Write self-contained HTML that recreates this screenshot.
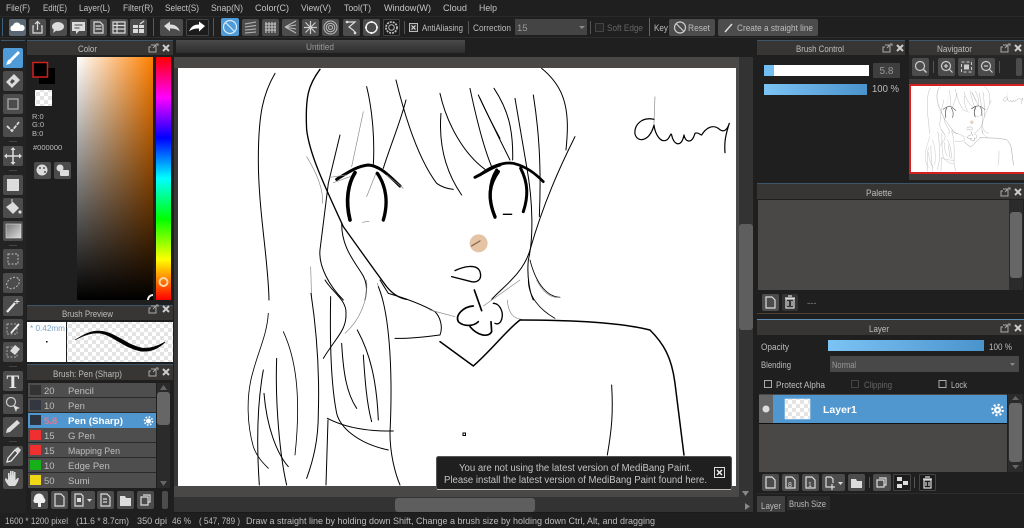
<!DOCTYPE html>
<html><head><meta charset="utf-8"><style>
html,body{margin:0;padding:0;background:#1f1f1f;width:1024px;height:528px;overflow:hidden}
svg{display:block}
#page{filter:blur(.35px)}
text{font-family:"Liberation Sans",sans-serif;font-size:9.5px;fill:#bdbdbd}
.m text{fill:#c4c4c4}
.h{fill:#383634}
.b{fill:#4c4c4c}
.i{fill:#dcdcdc}
.s{fill:none;stroke:#dcdcdc;stroke-width:1.2}
.l path{fill:none;stroke:#000;stroke-width:3;stroke-linecap:round;stroke-linejoin:round}
.l .f{stroke:#888;stroke-width:2}
</style></head><body>
<svg id="page" width="1024" height="528" viewBox="0 0 1024 528" xmlns="http://www.w3.org/2000/svg">
<defs>
<linearGradient id="gw" x1="0" x2="1" y1="0" y2="0"><stop offset="0" stop-color="#fff"/><stop offset="1" stop-color="#ff7f00"/></linearGradient>
<linearGradient id="gk" x1="0" x2="0" y1="0" y2="1"><stop offset="0" stop-color="#000" stop-opacity="0"/><stop offset="1" stop-color="#000"/></linearGradient>
<linearGradient id="hue" x1="0" x2="0" y1="0" y2="1"><stop offset="0" stop-color="#f00"/><stop offset=".167" stop-color="#f0f"/><stop offset=".333" stop-color="#00f"/><stop offset=".5" stop-color="#0ff"/><stop offset=".667" stop-color="#0f0"/><stop offset=".833" stop-color="#ff0"/><stop offset="1" stop-color="#f00"/></linearGradient>
<linearGradient id="bl" x1="0" x2="1" y1="0" y2="0"><stop offset="0" stop-color="#7cc3f5"/><stop offset="1" stop-color="#4a93cc"/></linearGradient>
<linearGradient id="tab" x1="0" x2="0" y1="0" y2="1"><stop offset="0" stop-color="#4a4a4a"/><stop offset="1" stop-color="#2e2e2e"/></linearGradient>
<linearGradient id="gr" x1="0" x2="1" y1="0" y2="1"><stop offset="0" stop-color="#777"/><stop offset="1" stop-color="#ddd"/></linearGradient>
<pattern id="ck" width="8" height="8" patternUnits="userSpaceOnUse"><rect width="8" height="8" fill="#fff"/><rect width="4" height="4" fill="#e4e4e4"/><rect x="4" y="4" width="4" height="4" fill="#e4e4e4"/></pattern>
<g id="hb"><path d="M151 45h5v7h-7v-5h2" fill="none" stroke="#aaa"/><path d="M153 48l3-3M156 44h2v2" stroke="#aaa" fill="none"/><path d="M163 45l6 6M169 45l-6 6" stroke="#ccc" stroke-width="2"/></g>
<g id="art" class="l">
<g transform="translate(240,60) scale(.3333)">
<path d="M105 40C70 100 55 160 55 300C55 450 85 600 87 720"/>
<path d="M240 28C205 75 195 110 200 210C210 290 260 390 310 500C360 570 410 640 440 680C460 705 480 715 500 718" style="stroke-width:4"/>
<path d="M380 80C395 140 405 230 400 315"/>
<path class="f" d="M370 155L335 320"/>
<path d="M300 225L265 370L240 570C235 620 270 680 310 720"/>
<path class="f" d="M200 290C225 330 250 380 248 430"/>
<path d="M498 120C480 190 450 260 430 325"/>
<path d="M468 60C490 150 530 290 590 370Q610 385 640 388"/>
<path d="M600 100C620 190 670 280 735 328"/>
<path d="M603 160C595 260 620 340 665 405"/>
<path d="M690 85C710 180 730 260 755 320"/>
<path d="M715 105Q750 180 780 235"/>
<path class="f" d="M410 335L380 410"/>
<path d="M305 490C305 560 340 600 365 640C385 670 380 700 375 720"/>
<path d="M290 358C320 340 350 318 385 315C420 318 445 345 480 378" style="stroke-width:9"/>
<path d="M345 338C325 370 315 420 330 480" style="stroke-width:11"/>
<path d="M412 340C440 380 445 430 430 480" style="stroke-width:10"/>
<path class="f" d="M270 352L320 345M280 368L330 350M490 385L440 345"/>
<path class="f" d="M367 487L387 484"/>
<path d="M705 352C730 340 755 322 780 315" style="stroke-width:9"/>
<path d="M775 335C750 370 740 410 765 470" style="stroke-width:10"/>
<circle cx="716" cy="550" r="27" style="fill:#e5c4a6;stroke:none"/>
<path d="M695 558L720 543" style="stroke:#8a6a50;stroke-width:4"/>
<path d="M645 632C670 620 710 610 720 635C728 660 710 670 690 664L635 650" style="stroke-width:4"/>
<path class="f" d="M212 620L215 720M412 670L428 720"/>
</g>
<g transform="translate(480,60) scale(.3333)">
<path d="M185 25C240 70 260 120 262 190C263 220 260 250 258 270"/>
<path d="M285 230C240 320 190 430 150 570C130 640 70 680 35 718"/>
<path d="M0 115C30 180 60 240 90 300"/>
<path d="M42 85C85 150 100 210 98 300"/>
<path d="M105 115L140 320C160 430 160 540 145 600C140 650 150 700 160 720"/>
<path d="M160 105C175 200 185 310 178 470"/>
<path d="M0 345C30 320 70 305 100 310C140 320 165 340 190 365" style="stroke-width:8"/>
<path d="M50 330C25 370 25 420 45 472" style="stroke-width:9"/>
<path d="M122 325C145 370 145 410 130 455" style="stroke-width:9"/>
<path d="M70 463L95 463" style="stroke-width:4"/>
<path d="M150 600C165 660 195 710 240 712" style="stroke-width:2.500"/>
<path class="f" d="M525 110L522 190"/>
<path d="M522 178C485 170 462 195 465 222C472 250 510 245 522 195C525 220 540 250 560 240C570 235 572 215 575 225C580 255 605 265 612 225C615 245 635 255 645 220C655 215 660 225 665 225C680 200 700 195 715 205C735 225 745 200 748 190C735 230 733 250 735 278" style="stroke-width:3.600"/>
</g>
<g transform="translate(240,280) scale(.3333)">
<path d="M85 100C80 170 55 210 35 290C20 350 20 430 40 500C50 530 70 550 85 565" style="stroke-width:2.500"/>
<path d="M213 40C225 120 240 240 235 400C235 480 220 540 200 595"/>
<path d="M255 0C280 40 320 60 318 100C320 150 290 170 250 235"/>
<path class="f" d="M380 0C385 60 360 120 315 160"/>
<path d="M272 50C270 150 270 300 290 400C300 440 350 490 445 510"/>
<path d="M305 190C310 280 320 340 350 385"/>
<path d="M352 150C390 220 410 300 415 420"/>
<path d="M370 225C375 300 380 370 395 425"/>
<path d="M415 20C445 90 460 250 450 460C450 520 465 580 480 615"/>
<path d="M262 415C310 440 370 455 460 453"/>
<path d="M264 420L258 615"/>
<path d="M130 155C165 230 185 340 165 525" style="stroke-width:2.500"/>
<path d="M110 235C105 370 120 530 140 615"/>
<path d="M70 270C50 380 50 500 58 615"/>
<path d="M72 340C80 440 110 520 145 560"/>
<path d="M465 175C510 177 560 170 600 165C610 140 600 110 585 95C540 70 480 50 445 40L420 0"/>
</g>
<g transform="translate(430,280) scale(.3333)">
<path class="f" d="M0 90L75 110"/>
<path d="M130 78C100 80 75 105 85 125C100 140 130 140 145 125" style="stroke-width:5"/>
<path d="M190 70C210 70 225 100 212 125Q205 135 195 130" style="stroke-width:4"/>
<path d="M120 140C140 165 175 175 185 155L183 125" style="stroke-width:5"/>
<path d="M133 30L155 92" style="stroke-width:5"/>
<path class="f" d="M160 78L270 0"/>
<path d="M30 185L130 258C190 205 230 150 270 120" style="stroke-width:4.500"/>
<path class="f" d="M232 60C235 100 250 115 275 118"/>
<path d="M270 120C400 120 560 125 660 150C700 190 725 230 735 310L762 525" style="stroke-width:4.500"/>
<path d="M545 315C550 400 545 450 532 525" style="stroke-width:3"/>
<path d="M295 0C295 50 330 90 375 115" style="stroke-width:2.500"/>
<path class="f" d="M320 0C340 40 365 55 390 52"/>
</g>
</g>
</defs>

<rect width="1024" height="528" fill="#1f1f1f"/>
<!-- menu -->
<g class="m">
<text x="6" y="11" textLength="24" lengthAdjust="spacingAndGlyphs">File(F)</text><text x="43" y="11" textLength="24" lengthAdjust="spacingAndGlyphs">Edit(E)</text><text x="79" y="11" textLength="31" lengthAdjust="spacingAndGlyphs">Layer(L)</text><text x="123" y="11" textLength="30" lengthAdjust="spacingAndGlyphs">Filter(R)</text><text x="165" y="11" textLength="34" lengthAdjust="spacingAndGlyphs">Select(S)</text><text x="211" y="11" textLength="32" lengthAdjust="spacingAndGlyphs">Snap(N)</text><text x="255" y="11" textLength="34" lengthAdjust="spacingAndGlyphs">Color(C)</text><text x="301" y="11" textLength="30" lengthAdjust="spacingAndGlyphs">View(V)</text><text x="344" y="11" textLength="27" lengthAdjust="spacingAndGlyphs">Tool(T)</text><text x="384" y="11" textLength="47" lengthAdjust="spacingAndGlyphs">Window(W)</text><text x="443" y="11" textLength="24" lengthAdjust="spacingAndGlyphs">Cloud</text><text x="479" y="11" textLength="18" lengthAdjust="spacingAndGlyphs">Help</text>
</g>
<rect y="16" width="1024" height="1" fill="#2a2a2a"/>
<rect y="37" width="1024" height="1" fill="#2c2c2c"/>
<!-- toolbar -->
<rect x="2" y="18" width="1" height="18" fill="#3c5f7c"/>
<rect x="153" y="18" width="1" height="18" fill="#3c5f7c"/>
<rect x="213" y="18" width="1" height="18" fill="#3c5f7c"/>
<rect x="649" y="18" width="1" height="18" fill="#3c6f9c"/>
<g>
<rect x="9" y="19" width="17" height="17" rx="2" fill="#5b6772"/>
<path d="M12 31a3 3 0 0 1 1-5.600a4 4 0 0 1 7.500-.5a3.200 3.200 0 0 1 2 6.100z" fill="#fff"/>
<rect class="b" x="29" y="19" width="17" height="17" rx="2"/><path class="s" d="M34 26h-1v7h9v-7h-1M37.500 30v-8M35 24l2.500-2.500l2.500 2.500"/>
<rect class="b" x="50" y="19" width="17" height="17" rx="2"/><ellipse class="i" cx="58" cy="26.500" rx="6" ry="4.500"/><path class="i" d="M54 29l-1 4l4-3z"/>
<rect class="b" x="70" y="19" width="17" height="17" rx="2"/><path class="i" d="M72 22h13v9h-6l-3 3v-3h-4z"/><path d="M74.500 25h8M74.500 28h5" stroke="#4a4a4a" fill="none"/>
<rect class="b" x="90" y="19" width="17" height="17" rx="2"/><path class="s" d="M94 22h6l3 3v8h-9zM95.500 26h6M95.500 29h6"/>
<rect class="b" x="110" y="19" width="18" height="17" rx="2"/><path class="s" d="M113 22h12v11h-12zM113 25.500h12M113 29h12M117 22v11"/>
<rect class="b" x="130" y="19" width="17" height="17" rx="2"/><path class="i" d="M133 25h5v3h-5zM139 25h5v3h-5zM133 29h5v4h-5zM139 29h5v4h-5z"/><path class="s" d="M140 24l4-3"/>
<rect class="b" x="160" y="19" width="23" height="17" rx="2"/><path class="i" d="M164 26l6-4.500v3c5 0 8 2 10 7c-3-2.500-6-3-10-3v3z"/>
<rect x="186.500" y="19.500" width="22" height="16" rx="1" fill="#1c1c1c" stroke="#444"/><path d="M205 26l-6-4.500v3c-5 0-8 2-10 7c3-2.500 6-3 10-3v3z" fill="#fff"/>
<rect x="221" y="18" width="18" height="18" rx="2" fill="#4f9bd8"/><circle cx="230" cy="27" r="6.500" fill="none" stroke="#d8ecfa" stroke-width="1.200"/><path d="M225.500 22.500l9 9" stroke="#d8ecfa" stroke-width="1.200"/>
<rect class="b" x="242" y="19" width="17" height="17" rx="2"/><path d="M245 24l11-2M245 27l11-1.500M245 30l11-1M245 33l11-1" stroke="#aaa" stroke-width="1.200" fill="none"/>
<rect class="b" x="262" y="19" width="17" height="17" rx="2"/><path d="M266 22v11M269 22v11M272 22v11M275 22v11M265 24h11M265 27h11M265 30h11" stroke="#ccc" fill="none"/>
<rect class="b" x="282" y="19" width="17" height="17" rx="2"/><path d="M285 27l11-6M285 27l11-2M285 27l11 2M285 27l11 6" stroke="#bbb" fill="none"/>
<rect class="b" x="302" y="19" width="17" height="17" rx="2"/><path d="M310.500 21v13M304 27.500h13M305.500 22.500l10 10M315.500 22.500l-10 10" stroke="#ccc" stroke-width="1.200" fill="none"/>
<rect class="b" x="322" y="19" width="17" height="17" rx="2"/><circle cx="330.500" cy="27.500" r="6.500" fill="none" stroke="#bbb"/><circle cx="330.500" cy="27.500" r="4.300" fill="none" stroke="#bbb"/><circle cx="330.500" cy="27.500" r="2" fill="none" stroke="#bbb"/>
<rect class="b" x="343" y="19" width="17" height="17" rx="2"/><path class="s" d="M347 22h8l-6 5l4 3l3 3"/><circle class="i" cx="347" cy="22" r="1.300"/><circle class="i" cx="355" cy="33" r="1.300"/>
<rect class="b" x="363" y="19" width="17" height="17" rx="2"/><circle cx="371.500" cy="27.500" r="5.500" fill="none" stroke="#eee" stroke-width="1.500"/><circle cx="371.500" cy="22" r="1" fill="#fff"/><circle cx="377" cy="27.500" r="1" fill="#fff"/><circle cx="366" cy="27.500" r="1" fill="#fff"/><circle cx="371.500" cy="33" r="1" fill="#fff"/>
<rect x="383.500" y="19.500" width="16" height="16" rx="1" fill="#1c1c1c" stroke="#444"/><circle cx="391.500" cy="27.500" r="5.500" fill="none" stroke="#bbb" stroke-width="1.800" stroke-dasharray="2 1"/><circle cx="391.500" cy="27.500" r="2.800" fill="none" stroke="#bbb"/>
</g>
<rect x="404" y="21" width="1" height="13" fill="#555"/>
<rect x="409.500" y="23.500" width="8" height="8" fill="#333" stroke="#bbb"/><path d="M411.500 25.500l4 4M415.500 25.500l-4 4" stroke="#ddd" stroke-width="1.200"/>
<text x="422" y="31" textLength="41" lengthAdjust="spacingAndGlyphs">AntiAliasing</text>
<rect x="468" y="21" width="1" height="13" fill="#555"/>
<text x="473" y="31" textLength="38" lengthAdjust="spacingAndGlyphs">Correction</text>
<rect x="515" y="19" width="72" height="16" fill="#444"/><text x="517" y="31" style="fill:#999">15</text><path d="M579 26h6l-3 3z" fill="#888"/>
<rect x="590" y="21" width="1" height="13" fill="#555"/>
<rect x="595.500" y="23.500" width="8" height="8" fill="#262626" stroke="#444"/>
<text x="607" y="31" style="fill:#666" textLength="36" lengthAdjust="spacingAndGlyphs">Soft Edge</text>
<text x="654" y="31" textLength="14" lengthAdjust="spacingAndGlyphs">Key</text>
<rect class="b" x="669" y="19" width="46" height="17" rx="2"/><circle cx="680" cy="27.500" r="5.500" fill="none" stroke="#ccc" stroke-width="1.200"/><path d="M676 23.500l8 8" stroke="#ccc" stroke-width="1.200"/><text x="688" y="31" textLength="22" lengthAdjust="spacingAndGlyphs">Reset</text>
<rect class="b" x="718" y="19" width="100" height="17" rx="2"/><path d="M725 32l7-8" stroke="#ddd" stroke-width="1.500"/><text x="737" y="31" textLength="76" lengthAdjust="spacingAndGlyphs">Create a straight line</text>

<!-- left tools -->
<rect x="0" y="38" width="26" height="475" fill="#232323"/>
<rect x="1" y="40" width="24" height="1" fill="#3c5568"/>
<g>
<rect x="3" y="48" width="20" height="20" rx="2" fill="#4f9bd8"/><path d="M18 51l2 2l-8 8l-2-2z" fill="#fff"/><path d="M10 59l2 2c-1 3-3 3-6 4c1-2 1-5 4-6z" fill="#fff"/>
<rect class="b" x="3" y="71" width="20" height="20" rx="2"/><path class="i" d="M14 74l6 6l-8 8l-6-6z"/><path d="M12 79l3 2l-3 3l-2-2z" fill="#4a4a4a"/>
<rect class="b" x="3" y="94" width="20" height="20" rx="2"/><rect x="8" y="99" width="10" height="10" fill="none" stroke="#aaa" stroke-width="1.300"/>
<rect class="b" x="3" y="117" width="20" height="20" rx="2"/><path d="M7 126l5 5l7-9" fill="none" stroke="#dcdcdc" stroke-width="1.800" stroke-dasharray="4 1"/>
<rect x="9" y="141" width="8" height="1" fill="#444"/>
<rect class="b" x="3" y="146" width="20" height="20" rx="2"/><path d="M13 148v16M5 156h16" stroke="#dcdcdc" stroke-width="1.500"/><path class="i" d="M13 147l2.500 3h-5zM13 165l2.500-3h-5zM4 156l3-2.500v5zM22 156l-3-2.500v5z"/>
<rect x="9" y="170" width="8" height="1" fill="#444"/>
<rect class="b" x="3" y="175" width="20" height="20" rx="2"/><rect class="i" x="7" y="179" width="12" height="12"/>
<rect class="b" x="3" y="198" width="20" height="20" rx="2"/><path class="i" d="M6 207l7-5l6 6l-6 6z"/><path d="M12 199v7" stroke="#dcdcdc"/><circle class="i" cx="20" cy="212" r="1.600"/>
<rect class="b" x="3" y="221" width="20" height="20" rx="2"/><rect x="6" y="224" width="15" height="14" fill="url(#gr)" stroke="#ddd" stroke-width=".6"/>
<rect x="9" y="245" width="8" height="1" fill="#444"/>
<rect class="b" x="3" y="249" width="20" height="20" rx="2"/><rect x="8" y="254" width="10" height="10" fill="none" stroke="#bbb" stroke-dasharray="2 1.500"/>
<rect class="b" x="3" y="273" width="20" height="20" rx="2"/><ellipse cx="13" cy="283" rx="7" ry="5" transform="rotate(-35 13 283)" fill="none" stroke="#bbb" stroke-dasharray="2 1.500"/>
<rect class="b" x="3" y="296" width="20" height="20" rx="2"/><path d="M7 312l8-9" stroke="#e8e8e8" stroke-width="2.400"/><path d="M17 299v5M14.500 301.500h5" stroke="#e8e8e8"/>
<rect class="b" x="3" y="319" width="20" height="20" rx="2"/><rect x="7" y="324" width="10" height="10" fill="none" stroke="#aaa" stroke-dasharray="2 1.500"/><path d="M11 333l8-9" stroke="#eee" stroke-width="1.800"/>
<rect class="b" x="3" y="342" width="20" height="20" rx="2"/><rect x="7" y="347" width="10" height="10" fill="none" stroke="#aaa" stroke-dasharray="2 1.500"/><path class="i" d="M15 345l5 4l-5 6l-5-4z"/>
<rect x="9" y="366" width="8" height="1" fill="#444"/>
<rect class="b" x="3" y="371" width="20" height="20" rx="2"/><text x="6.500" y="388" style="font-family:'Liberation Serif',serif;font-weight:bold;font-size:19px;fill:#e8e8e8">T</text>
<rect class="b" x="3" y="394" width="20" height="20" rx="2"/><circle cx="11" cy="402" r="4.500" fill="none" stroke="#ccc" stroke-width="1.200"/><path class="i" d="M13 405l7 3l-3 1l-1 3z"/>
<rect class="b" x="3" y="417" width="20" height="20" rx="2"/><path class="i" d="M17 420l3 3l-10 9l-4 1l1-4z"/>
<rect x="9" y="441" width="8" height="1" fill="#444"/>
<rect class="b" x="3" y="446" width="20" height="20" rx="2"/><path d="M7 462l1-4l7-8l3 3l-7 8z" fill="none" stroke="#e8e8e8" stroke-width="1.300"/><path class="i" d="M15 449l3-2l3 3l-2 3z"/>
<rect class="b" x="3" y="469" width="20" height="20" rx="2"/><path class="i" d="M9 486c-2-2-4-5-4-7l1-1l2 2v-7h1.500l.5 5v-7h1.500l.5 6v-6h1.500l.5 6v-5h1.500v8l2-2h1.200c0 3-2 6-3.700 8z"/>
</g>

<!-- color panel -->
<rect x="27" y="40" width="146" height="1" fill="#3c5568"/>
<rect class="h" x="27" y="41" width="146" height="14"/>
<text x="78" y="52" textLength="19" lengthAdjust="spacingAndGlyphs">Color</text>
<use href="#hb"/>
<rect x="77" y="57" width="76" height="243" fill="url(#gw)"/><rect x="77" y="57" width="76" height="243" fill="url(#gk)"/>
<rect x="156" y="57" width="15" height="243" fill="url(#hue)"/>
<circle cx="163.500" cy="282" r="4" fill="none" stroke="#ffd9a8" stroke-width="2"/>
<path d="M148 300a5 5 0 0 1 5-5" fill="none" stroke="#eee" stroke-width="2"/>
<rect x="39" y="68" width="16" height="16" fill="#000"/>
<rect x="33" y="62.500" width="14.500" height="14.500" fill="#000" stroke="#d41f1f" stroke-width="1.500"/>
<rect x="35" y="90" width="17" height="16" fill="url(#ck)"/>
<text x="32" y="119" style="font-size:7.500px">R:0</text><text x="32" y="127" style="font-size:7.500px">G:0</text><text x="32" y="136" style="font-size:7.500px">B:0</text><text x="33" y="150" style="font-size:7.500px">#000000</text>
<rect class="b" x="34" y="162" width="17" height="17" rx="2"/><circle class="i" cx="42" cy="170" r="5.500"/><circle cx="40" cy="168" r="1" fill="#555"/><circle cx="44" cy="168" r="1" fill="#555"/><circle cx="45" cy="172" r="1" fill="#555"/>
<rect class="b" x="54" y="162" width="17" height="17" rx="2"/><circle class="i" cx="60" cy="168" r="3.500"/><rect class="i" x="60" y="170" width="9" height="6" rx="1"/>

<!-- brush preview -->
<rect x="27" y="305" width="146" height="1" fill="#3c5568"/>
<rect class="h" x="27" y="306" width="146" height="14"/>
<text x="62" y="317" textLength="51" lengthAdjust="spacingAndGlyphs">Brush Preview</text>
<use href="#hb" y="261"/>
<rect x="27" y="322" width="39" height="40" fill="#fff"/>
<rect x="67" y="322" width="106" height="40" fill="url(#ck)"/>
<text x="30" y="331" style="fill:#7aa3c4;font-size:8.500px" textLength="35" lengthAdjust="spacingAndGlyphs">* 0.42mm</text>
<rect x="46" y="341" width="1.500" height="1.500" fill="#000"/>
<path d="M75 340C83 335 90 331 98 331C115 331 125 345 142 348C150 349 158 346 165 342C157 350 148 352 140 351C122 347 112 334 98 333C90 333 82 336 75 340z" fill="#000" stroke="#000" stroke-width=".6"/>

<!-- brush list -->
<rect x="27" y="364" width="146" height="1" fill="#3c5568"/>
<rect class="h" x="27" y="365" width="146" height="15"/>
<text x="53" y="377" textLength="69" lengthAdjust="spacingAndGlyphs">Brush: Pen (Sharp)</text>
<use href="#hb" y="324"/>
<rect x="28" y="383" width="128" height="105" fill="#4e4e4e"/>
<g fill="#2a2a2a"><rect x="28" y="397" width="128" height="1"/><rect x="28" y="412" width="128" height="1"/><rect x="28" y="427" width="128" height="1"/><rect x="28" y="442" width="128" height="1"/><rect x="28" y="457" width="128" height="1"/><rect x="28" y="472" width="128" height="1"/></g>
<rect x="28" y="413" width="128" height="15" fill="#5097d0"/>
<rect x="30" y="385" width="11" height="10" fill="#333"/><rect x="30" y="400" width="11" height="10" fill="#333840"/><rect x="30" y="415" width="11" height="10" fill="#2c3440"/><rect x="30" y="430" width="11" height="10" fill="#f03030"/><rect x="30" y="445" width="11" height="10" fill="#f03030"/><rect x="30" y="460" width="11" height="10" fill="#18b018"/><rect x="30" y="475" width="11" height="10" fill="#f0d818"/>
<text x="44" y="394">20</text><text x="68" y="394">Pencil</text><text x="44" y="409">10</text><text x="68" y="409">Pen</text>
<text x="44" y="424" style="fill:#e87a8a;font-weight:bold">5.8</text><text x="68" y="424" style="fill:#fff;font-weight:bold" textLength="55" lengthAdjust="spacingAndGlyphs">Pen (Sharp)</text>
<text x="44" y="439">15</text><text x="68" y="439">G Pen</text><text x="44" y="454">15</text><text x="68" y="454" textLength="52" lengthAdjust="spacingAndGlyphs">Mapping Pen</text><text x="44" y="469">10</text><text x="68" y="469">Edge Pen</text><text x="44" y="484">50</text><text x="68" y="484">Sumi</text>
<circle cx="148.500" cy="421" r="2.500" fill="#fff"/><circle cx="148.500" cy="421" r="4" fill="none" stroke="#fff" stroke-width="1.600" stroke-dasharray="1.600 1.540"/>
<rect x="157" y="383" width="13" height="105" fill="#2b2b2b"/>
<rect x="157" y="392" width="13" height="33" rx="3" fill="#666"/>
<path d="M160 390l3.500-5l3.500 5zM160 481l3.500 5l3.500-5z" fill="#666"/>
<g>
<rect class="b" x="31" y="491" width="17" height="18" rx="2"/><path d="M34 499a4 4 0 0 1 10-1a3 3 0 0 1 0 5h-3v4h-3v-4h-3a2.500 2.500 0 0 1-1-4z" fill="#eee"/>
<rect class="b" x="51" y="491" width="17" height="18" rx="2"/><path class="s" d="M55 494h6l3 3v9h-9z"/>
<rect class="b" x="71" y="491" width="24" height="18" rx="2"/><path class="s" d="M75 494h6l2 2v10h-8z"/><rect class="i" x="77" y="498" width="4" height="4"/><path class="i" d="M87 499h5l-2.500 3z"/>
<rect class="b" x="97" y="491" width="17" height="18" rx="2"/><path class="s" d="M101 494h6l3 3v9h-9zM103 499h4M103 502h4"/>
<rect class="b" x="117" y="491" width="17" height="18" rx="2"/><path class="i" d="M120 496h5l1 2h5v8h-11z"/>
<rect class="b" x="137" y="491" width="17" height="18" rx="2"/><path class="s" d="M143 495h7v7h-2M141 497h7v8h-7z"/>
<rect class="b" x="162" y="491" width="6" height="18" rx="2"/>
</g>

<!-- canvas area -->
<rect x="174" y="40" width="578" height="454" fill="#1f1f1f"/>
<rect x="176" y="40" width="289" height="13" fill="url(#tab)"/>
<text x="306" y="50" style="fill:#999" textLength="28" lengthAdjust="spacingAndGlyphs">Untitled</text>
<rect x="174" y="57" width="578" height="11" fill="#4a4846"/>
<rect x="174" y="68" width="4" height="418" fill="#3a3836"/>
<rect x="178" y="68" width="558" height="418" fill="#fff"/>
<use href="#art"/>
<rect x="463" y="433" width="2.500" height="2.500" fill="#fff" stroke="#000"/>
<rect x="174" y="486" width="578" height="11" fill="#4a4846"/>
<rect x="736" y="57" width="3" height="440" fill="#4a4846"/>
<rect x="739" y="57" width="14" height="440" fill="#333"/>
<rect x="739" y="224" width="14" height="106" rx="3" fill="#5e5e5e"/>
<rect x="174" y="497" width="579" height="16" fill="#333"/>
<rect x="395" y="498" width="140" height="14" rx="3" fill="#5e5e5e"/>
<path d="M742 491h7l-3.500 5zM745 503v7l5-3.500z" fill="#888"/>
<rect x="174" y="512" width="579" height="1" fill="#1a1a1a"/>

<!-- notification -->
<rect x="436.500" y="456.500" width="295" height="33" rx="2" fill="#1f1f1f" stroke="#555"/>
<path d="M437 489.500h294" stroke="#bbb"/>
<text x="459" y="471" style="font-size:10px;fill:#c4c4c4" textLength="233" lengthAdjust="spacingAndGlyphs">You are not using the latest version of MediBang Paint.</text>
<text x="444" y="483" style="font-size:10px;fill:#c4c4c4" textLength="263" lengthAdjust="spacingAndGlyphs">Please install the latest version of MediBang Paint found here.</text>
<rect x="714.500" y="467.500" width="10" height="10" fill="none" stroke="#ddd"/><path d="M717 470l5 5M722 470l-5 5" stroke="#eee" stroke-width="1.500"/>

<!-- brush control -->
<rect x="757" y="40" width="148" height="1" fill="#3c5568"/>
<rect class="h" x="757" y="41" width="148" height="14"/>
<text x="796" y="52" textLength="48" lengthAdjust="spacingAndGlyphs">Brush Control</text>
<use href="#hb" x="734"/>
<rect x="764" y="65" width="105" height="11" fill="#fff"/><rect x="764" y="65" width="10" height="11" fill="#72bdf2"/>
<rect x="873" y="63" width="27" height="15" rx="1" fill="#3e3e3e"/><text x="886.500" y="74" text-anchor="middle" style="font-size:10px;fill:#999">5.8</text>
<rect x="764" y="84" width="103" height="11" fill="url(#bl)"/>
<text x="872" y="92" style="font-size:10px" textLength="27" lengthAdjust="spacingAndGlyphs">100 %</text>

<!-- navigator -->
<rect x="909" y="40" width="115" height="1" fill="#3c5568"/>
<rect class="h" x="909" y="41" width="115" height="14"/>
<text x="937" y="52" textLength="35" lengthAdjust="spacingAndGlyphs">Navigator</text>
<use href="#hb" x="852"/>
<rect x="909" y="55" width="115" height="24" fill="#262626"/>
<rect x="909" y="79" width="115" height="101" fill="#3f3d3b"/>
<g>
<rect class="b" x="912" y="58" width="17" height="18" rx="2"/><circle cx="920" cy="66" r="4.500" fill="none" stroke="#ccc" stroke-width="1.200"/><path d="M923.500 69.500l3 3" stroke="#ccc" stroke-width="1.500"/>
<rect x="933" y="61" width="1" height="12" fill="#555"/>
<rect class="b" x="938" y="58" width="17" height="18" rx="2"/><circle cx="946" cy="66" r="4.500" fill="none" stroke="#ccc" stroke-width="1.200"/><path d="M949.500 69.500l3 3M944 66h4M946 64v4" stroke="#ccc" stroke-width="1.200"/>
<rect class="b" x="958" y="58" width="17" height="18" rx="2"/><rect x="961.500" y="62" width="10" height="10" fill="none" stroke="#ccc" stroke-dasharray="3 2"/><rect x="964" y="64.500" width="5" height="5" fill="#ccc"/>
<rect class="b" x="978" y="58" width="17" height="18" rx="2"/><circle cx="986" cy="66" r="4.500" fill="none" stroke="#ccc" stroke-width="1.200"/><path d="M989.500 69.500l3 3M984 66h4" stroke="#ccc" stroke-width="1.200"/>
<rect x="999" y="61" width="1" height="12" fill="#555"/>
<rect class="b" x="1016" y="58" width="6" height="18" rx="2"/>
</g>
<rect x="910" y="85" width="115" height="88" fill="#fff" stroke="#d81f1f" stroke-width="2"/>
<svg x="911" y="86" width="113" height="86" viewBox="178 68 558 418" opacity=".65"><use href="#art"/></svg>

<!-- palette -->
<rect x="757" y="183" width="267" height="1" fill="#3c5568"/>
<rect class="h" x="757" y="184" width="267" height="15"/>
<text x="866" y="196" textLength="26" lengthAdjust="spacingAndGlyphs">Palette</text>
<use href="#hb" x="852" y="144"/>
<rect x="758" y="200" width="251" height="90" fill="#4a4846"/>
<rect x="1009" y="200" width="14" height="90" fill="#2b2b2b"/>
<rect x="1010" y="212" width="12" height="66" rx="3" fill="#666"/>
<rect class="b" x="762" y="294" width="17" height="17" rx="2"/><path class="s" d="M766 297h6l3 3v8h-9z"/>
<rect x="782" y="294" width="16" height="17" rx="2" fill="#333"/><path class="s" d="M786 299h8v9h-8zM785 298h10M788 296h4M788 301v5M792 301v5"/>
<text x="807" y="306" style="fill:#888">---</text>
<rect x="757" y="313" width="267" height="1" fill="#4a4030"/>

<!-- layer -->
<rect x="757" y="319" width="267" height="1" fill="#5a8db5"/>
<rect class="h" x="757" y="320" width="267" height="15"/>
<text x="869" y="332" textLength="20" lengthAdjust="spacingAndGlyphs">Layer</text>
<use href="#hb" x="852" y="280"/>
<text x="761" y="350" textLength="28" lengthAdjust="spacingAndGlyphs">Opacity</text>
<rect x="828" y="340" width="156" height="11" fill="url(#bl)"/>
<text x="989" y="350" textLength="23" lengthAdjust="spacingAndGlyphs">100 %</text>
<text x="761" y="368" textLength="30" lengthAdjust="spacingAndGlyphs">Blending</text>
<rect x="830" y="356" width="189" height="16" rx="1" fill="#484848"/><text x="832" y="368" style="fill:#999" textLength="24" lengthAdjust="spacingAndGlyphs">Normal</text><path d="M1010 363h5l-2.500 3z" fill="#888"/>
<rect x="764.500" y="380.500" width="7" height="7" fill="none" stroke="#aaa"/><text x="776" y="388" textLength="49" lengthAdjust="spacingAndGlyphs">Protect Alpha</text>
<rect x="851.500" y="380.500" width="7" height="7" fill="none" stroke="#444"/><text x="864" y="388" style="fill:#666" textLength="28" lengthAdjust="spacingAndGlyphs">Clipping</text>
<rect x="939" y="380.500" width="7" height="7" fill="none" stroke="#aaa"/><text x="951" y="388" textLength="16" lengthAdjust="spacingAndGlyphs">Lock</text>
<rect x="759" y="394" width="248" height="78" fill="#4a4846"/>
<rect x="759" y="395" width="14" height="28" fill="#666"/>
<circle cx="766" cy="409" r="3.500" fill="#ddd"/>
<rect x="773" y="395" width="234" height="28" fill="#5097d0"/>
<rect x="759" y="423" width="248" height="1" fill="#111"/>
<rect x="785" y="399" width="25" height="20" fill="url(#ck)" stroke="#eee" stroke-width=".6"/>
<text x="823" y="413" style="font-weight:bold;font-size:10.500px;fill:#fff">Layer1</text>
<circle cx="997.500" cy="410" r="3.500" fill="#fff"/><circle cx="997.500" cy="410" r="5.200" fill="none" stroke="#fff" stroke-width="2.200" stroke-dasharray="2 2.080"/><circle cx="997.500" cy="410" r="1.300" fill="#5097d0"/>
<rect x="1008" y="394" width="15" height="78" fill="#2b2b2b"/>
<rect x="1009" y="403" width="13" height="59" rx="3" fill="#666"/>
<path d="M1012 400l3.500-4l3.500 4zM1012 465l3.500 4l3.500-4z" fill="#666"/>
<g>
<rect class="b" x="762" y="474" width="17" height="17" rx="2"/><path class="s" d="M766 477h6l3 3v8h-9z"/>
<rect class="b" x="782" y="474" width="17" height="17" rx="2"/><path class="s" d="M786 477h6l3 3v8h-9z"/><text x="788" y="487" style="font-size:7px;fill:#ddd">8</text>
<rect class="b" x="802" y="474" width="17" height="17" rx="2"/><path class="s" d="M806 477h6l3 3v8h-9z"/><text x="808" y="487" style="font-size:7px;fill:#ddd">1</text>
<rect class="b" x="822" y="474" width="23" height="17" rx="2"/><path class="s" d="M826 477h5l2 2v4M826 477v10h3M832 484v6M829 487h6"/><path class="i" d="M838 482h5l-2.500 3z"/>
<rect class="b" x="848" y="474" width="17" height="17" rx="2"/><path class="i" d="M851 479h5l1 2h5v7h-11z"/>
<rect x="869" y="477" width="1" height="11" fill="#555"/>
<rect class="b" x="873" y="474" width="18" height="17" rx="2"/><path class="s" d="M879 478h7v7h-2M877 480h7v7h-7z"/>
<rect x="893.500" y="474.500" width="17" height="16" rx="1" fill="#1c1c1c" stroke="#444"/><path class="i" d="M897 477h5v4h-5zM897 484h5v4h-5zM903 481h5v4h-5z"/>
<rect x="914" y="477" width="1" height="11" fill="#555"/>
<rect x="919.500" y="474.500" width="16" height="16" rx="1" fill="#1c1c1c" stroke="#444"/><path class="s" d="M924 480h7v8h-7zM923 479h9M925 477h5M926 482v4M929 482v4"/>
</g>
<rect x="757" y="493" width="267" height="1" fill="#2c2c2c"/>
<rect x="757" y="496" width="28" height="16" fill="#3f3f3f"/>
<text x="761" y="509" style="fill:#bbb" textLength="20" lengthAdjust="spacingAndGlyphs">Layer</text>
<rect x="787" y="496" width="43" height="14" fill="#2a2a2a"/>
<text x="789" y="507" style="fill:#bbb" textLength="37" lengthAdjust="spacingAndGlyphs">Brush Size</text>

<!-- status -->
<text x="5" y="524" textLength="63" lengthAdjust="spacingAndGlyphs">1600 * 1200 pixel</text><text x="76" y="524" textLength="53" lengthAdjust="spacingAndGlyphs">(11.6 * 8.7cm)</text><text x="137" y="524" textLength="30" lengthAdjust="spacingAndGlyphs">350 dpi</text><text x="172" y="524" textLength="19" lengthAdjust="spacingAndGlyphs">46 %</text><text x="199" y="524" textLength="41" lengthAdjust="spacingAndGlyphs">( 547, 789 )</text><text x="246" y="524" textLength="409" lengthAdjust="spacingAndGlyphs">Draw a straight line by holding down Shift, Change a brush size by holding down Ctrl, Alt, and dragging</text>
</svg>
</body></html>
